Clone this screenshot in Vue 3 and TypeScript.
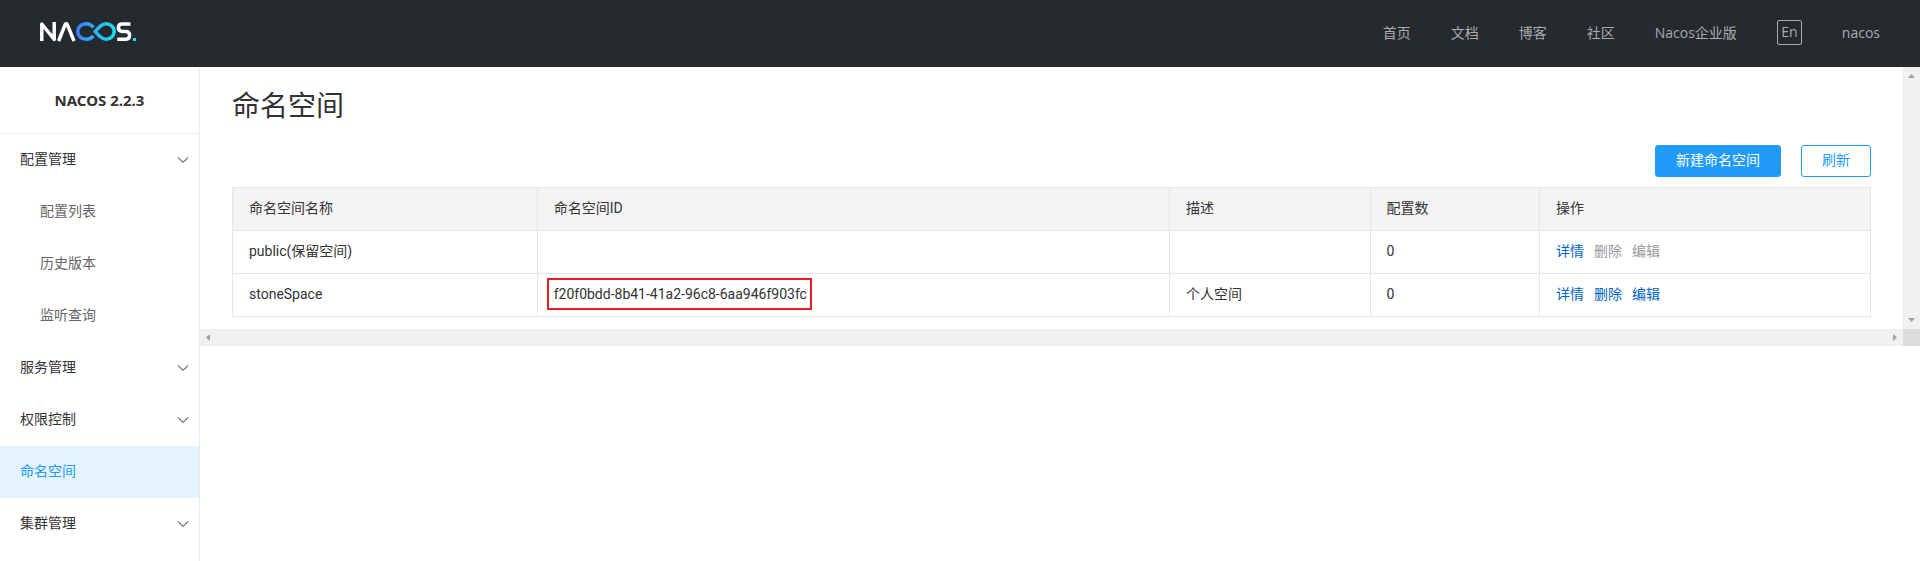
<script setup lang="ts">
interface NavLink {
  label: string
}

interface MenuItem {
  label: string
  children?: string[]
  expandable: boolean
  active?: boolean
}

interface Namespace {
  name: string
  id: string
  description: string
  configCount: number
  reserved: boolean
}

const navLinks: NavLink[] = [
  { label: '首页' },
  { label: '文档' },
  { label: '博客' },
  { label: '社区' },
  { label: 'Nacos企业版' },
]

const menu: MenuItem[] = [
  { label: '配置管理', expandable: true, children: ['配置列表', '历史版本', '监听查询'] },
  { label: '服务管理', expandable: true },
  { label: '权限控制', expandable: true },
  { label: '命名空间', expandable: false, active: true },
  { label: '集群管理', expandable: true },
]

const namespaces: Namespace[] = [
  { name: 'public(保留空间)', id: '', description: '', configCount: 0, reserved: true },
  {
    name: 'stoneSpace',
    id: 'f20f0bdd-8b41-41a2-96c8-6aa946f903fc',
    description: '个人空间',
    configCount: 0,
    reserved: false,
  },
]
</script>

<template>
  <div class="layout">
    <header class="topbar">
      <a class="logo" href="#" aria-label="Nacos">
        <svg width="98" height="22" viewBox="0 0 98 22" fill="none" stroke-linejoin="round">
          <defs>
            <linearGradient id="loop" gradientUnits="userSpaceOnUse" x1="36" y1="0" x2="76" y2="0">
              <stop offset="0" stop-color="#3f7dff" />
              <stop offset="1" stop-color="#16e6f2" />
            </linearGradient>
          </defs>
          <g stroke="#fff" stroke-width="3.5">
            <path d="M1.8 21V4L14.2 19.4V2" />
            <path d="M18.6 21L25.2 4.4Q26.2 3 27.2 4.4L34 21" />
            <path d="M90.5 4H82Q78.4 4 78.4 7.6T82 11.4H86Q89.6 11.4 89.6 15.3T86 19.2H77.2" />
          </g>
          <path
            d="M53.6 7.4C51.4 5 49 3.7 46 3.7C41.2 3.7 37.7 7.2 37.7 11.5S41.2 19.3 46 19.3C49 19.3 51.2 18.1 53.4 15.9M55 11.5L60 6.4C62 4.6 63.8 3.7 66.2 3.7C70.6 3.7 74.2 7.2 74.2 11.5S70.6 19.3 66.2 19.3C63.8 19.3 62 18.5 60 16.6L55 11.5Z"
            stroke="url(#loop)"
            stroke-width="3.5"
          />
          <rect x="93" y="18" width="3" height="3" fill="#16e6f2" />
        </svg>
      </a>
      <nav class="nav">
        <a v-for="link in navLinks" :key="link.label" href="#">{{ link.label }}</a>
        <button class="lang" type="button">En</button>
        <a href="#">nacos</a>
      </nav>
    </header>

    <div class="body">
      <aside class="sidebar">
        <h2 class="version">NACOS 2.2.3</h2>
        <ul class="menu">
          <li v-for="item in menu" :key="item.label">
            <a class="menu-item" :class="{ active: item.active }" href="#">
              <span>{{ item.label }}</span>
              <svg v-if="item.expandable" width="12" height="8" viewBox="0 0 12 8" fill="none">
                <path d="M1 1.5L6 6.3L11 1.5" stroke="#808080" stroke-width="1.2" />
              </svg>
            </a>
            <ul v-if="item.children" class="submenu">
              <li v-for="child in item.children" :key="child">
                <a class="menu-item child" href="#"><span>{{ child }}</span></a>
              </li>
            </ul>
          </li>
        </ul>
      </aside>

      <div class="viewport">
        <main class="content">
          <h1 class="title">命名空间</h1>
          <div class="actions">
            <button class="btn primary" type="button">新建命名空间</button>
            <button class="btn" type="button">刷新</button>
          </div>
          <table class="table">
            <colgroup>
              <col class="col-name" />
              <col class="col-id" />
              <col class="col-desc" />
              <col class="col-count" />
              <col />
            </colgroup>
            <thead>
              <tr>
                <th>命名空间名称</th>
                <th>命名空间ID</th>
                <th>描述</th>
                <th>配置数</th>
                <th>操作</th>
              </tr>
            </thead>
            <tbody>
              <tr v-for="row in namespaces" :key="row.name">
                <td>{{ row.name }}</td>
                <td><span v-if="row.id" class="marked">{{ row.id }}</span></td>
                <td>{{ row.description }}</td>
                <td>{{ row.configCount }}</td>
                <td>
                  <div class="ops">
                    <a href="#">详情</a>
                    <a href="#" :class="{ disabled: row.reserved }">删除</a>
                    <a href="#" :class="{ disabled: row.reserved }">编辑</a>
                  </div>
                </td>
              </tr>
            </tbody>
          </table>
        </main>
        <div class="bar vertical" aria-hidden="true">
          <svg width="7" height="4" viewBox="0 0 7 4"><path d="M0 4L3.5 0L7 4Z" /></svg>
          <svg width="7" height="4" viewBox="0 0 7 4"><path d="M0 0L3.5 4L7 0Z" /></svg>
        </div>
        <div class="bar horizontal" aria-hidden="true">
          <svg width="4" height="7" viewBox="0 0 4 7"><path d="M4 0L0 3.5L4 7Z" /></svg>
          <svg width="4" height="7" viewBox="0 0 4 7"><path d="M0 0L4 3.5L0 7Z" /></svg>
        </div>
        <div class="corner"></div>
      </div>
    </div>
  </div>
</template>

<style>
body {
  margin: 0;
  background: #fff;
}
</style>

<style scoped>
.layout {
  display: flex;
  flex-direction: column;
  min-height: 100vh;
  color: #333;
  font: 14px/20px Roboto, 'Noto Sans CJK SC', sans-serif;
}

a {
  color: inherit;
  text-decoration: none;
}

ul {
  margin: 0;
  padding: 0;
  list-style: none;
}

button {
  font: inherit;
  cursor: pointer;
}

.topbar {
  display: flex;
  align-items: center;
  justify-content: space-between;
  height: 67px;
  padding: 0 40px 2px;
  box-sizing: border-box;
  background: #252a2f;
}

.logo svg {
  display: block;
  margin-bottom: 4px;
}

.nav {
  display: flex;
  align-items: center;
  gap: 40px;
  color: #a9abad;
  font-family: 'Open Sans', 'Noto Sans CJK SC', sans-serif;
}

.lang {
  width: 25px;
  height: 25px;
  padding: 0 0 2px;
  border: 1px solid #a9abad;
  border-radius: 2px;
  background: none;
  color: inherit;
  line-height: 20px;
}

.body {
  display: flex;
  flex: 1;
  align-items: stretch;
}

.sidebar {
  flex: 0 0 200px;
  box-sizing: border-box;
  border-right: 1px solid #ebebeb;
}

.version {
  margin: 0;
  border-bottom: 1px solid #ebebeb;
  font: bold 15px/66px 'Noto Sans', sans-serif;
  text-align: center;
}

.menu-item {
  display: flex;
  align-items: center;
  justify-content: space-between;
  height: 52px;
  padding: 0 10px 0 20px;
}

.menu-item span {
  padding-bottom: 2px;
}

.menu-item.child {
  padding-left: 40px;
  color: #666;
}

.menu-item.active {
  background: #e4f3fe;
  color: #209bfa;
}

.viewport {
  display: grid;
  flex: 1;
  grid-template-columns: 1fr 17px;
  grid-template-rows: auto 17px;
  align-self: flex-start;
  min-width: 0;
}

.content {
  min-width: 0;
  padding: 20px 32px 12px;
}

.title {
  margin: 0 0 18px;
  font-size: 28px;
  font-weight: 400;
  line-height: 40px;
}

.actions {
  display: flex;
  justify-content: flex-end;
  gap: 20px;
  margin-bottom: 10px;
}

.btn {
  height: 32px;
  padding: 0 20px 2px;
  border: 1px solid #209bfa;
  border-radius: 3px;
  background: #fff;
  color: #209bfa;
}

.btn.primary {
  background: #209bfa;
  color: #fff;
}

.table {
  width: 100%;
  border-collapse: collapse;
  table-layout: fixed;
}

.col-name {
  width: 18.6%;
}

.col-id {
  width: 38.6%;
}

.col-desc {
  width: 12.25%;
}

.col-count {
  width: 10.35%;
}

th,
td {
  height: 40px;
  padding: 0 16px 2px;
  border: 1px solid #e6e6e6;
  font-weight: 400;
  text-align: left;
}

th {
  background: #f4f4f4;
}

.marked {
  display: inline-block;
  margin: 0 -7px;
  padding: 4px 3px 4px 5px;
  border: 2px solid #ed1c24;
  vertical-align: middle;
}

.ops {
  display: flex;
  gap: 10px;
  color: #0064c8;
}

.ops .disabled {
  color: #999;
}

.bar {
  display: flex;
  align-items: center;
  justify-content: space-between;
  background: #f0f0f0;
  fill: #a0a0a0;
}

.vertical {
  flex-direction: column;
  padding: 7px 0;
}

.horizontal {
  padding: 0 6px;
}

.corner {
  background: #dcdcdc;
}
</style>
